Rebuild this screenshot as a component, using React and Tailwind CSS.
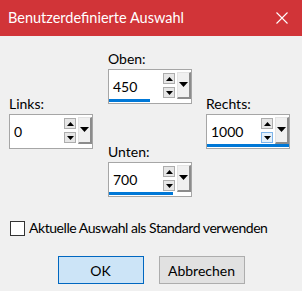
import React from "react";

const Arrow = ({ dir = "up", w = 7, h = 4 }) => (
  <svg width={w} height={h} viewBox={`0 0 ${w} ${h}`} className="block">
    {dir === "up" ? (
      <polygon points={`0,${h} ${w / 2},0 ${w},${h}`} fill="#000" />
    ) : (
      <polygon points={`0,0 ${w},0 ${w / 2},${h}`} fill="#000" />
    )}
  </svg>
);

const SpinField = ({ label, value, bar, hotDown }) => (
  <div className="flex flex-col w-[84px]">
    <span className="h-5 leading-5 text-[14px] text-black">{label}</span>
    <div className="relative flex h-[35px] border border-[#a6a6a6] bg-white">
      <span className="flex items-center w-[54px] pl-[4px] text-[14px] text-black">{value}</span>
      {/* up / down buttons */}
      <div className="flex flex-col gap-[3px] mt-[3px] w-[12px]">
        <div className="flex h-[11px] items-center justify-center border border-[#adadad] bg-[#e6e6e6]">
          <Arrow dir="up" />
        </div>
        <div
          className={
            hotDown
              ? "flex h-[11px] items-center justify-center border border-[#7eb4ea] bg-[#e5f1fb]"
              : "flex h-[11px] items-center justify-center border border-[#adadad] bg-[#e6e6e6]"
          }
        >
          <Arrow dir="down" />
        </div>
      </div>
      {/* dropdown */}
      <div className="ml-[2px] mt-[2px] flex h-[27px] w-[14px] items-start justify-center pt-[9px] border-l border-t border-l-[#e3e3e3] border-t-[#e3e3e3] border-r-2 border-b-2 border-r-[#8c8c8c] border-b-[#8c8c8c] bg-[#f0f0f0]">
        <Arrow dir="down" w={9} h={5} />
      </div>
      {bar > 0 && (
        <div
          className="absolute left-0 bottom-[1px] h-[3px] bg-[#0078d7]"
          style={{ width: `${bar}px` }}
        />
      )}
    </div>
  </div>
);

export default function App() {
  return (
    <div className="w-[302px] h-[291px] bg-[#f0f0f0] font-['Lato',sans-serif] overflow-hidden">
      {/* title bar */}
      <div className="flex h-9 items-center justify-between bg-[#d13438] pl-2 pr-[14px] text-white text-[14.5px]">
        <span>Benutzerdefinierte Auswahl</span>
        <svg width="12" height="12" viewBox="0 0 12 12">
          <path d="M0.5 0.5 L11.5 11.5 M11.5 0.5 L0.5 11.5" stroke="#fff" strokeWidth="1.1" />
        </svg>
      </div>

      {/* fields */}
      <div className="flex pl-[9px] pt-[13px]">
        <div className="mt-[45px]">
          <SpinField label="Links:" value="0" bar={0} />
        </div>
        <div className="ml-[15px] flex flex-col gap-[38px]">
          <SpinField label="Oben:" value="450" bar={41} />
          <SpinField label="Unten:" value="700" bar={64} />
        </div>
        <div className="ml-[14px] mt-[45px]">
          <SpinField label="Rechts:" value="1000" bar={82} hotDown />
        </div>
      </div>

      {/* checkbox */}
      <label className="mt-[21px] flex items-center pl-[10px] text-[14px] text-black whitespace-nowrap">
        <span className="h-[15px] w-[15px] border border-[#333] bg-white" />
        <span className="ml-[4px] leading-5 tracking-[-0.45px]">Aktuelle Auswahl als Standard verwenden</span>
      </label>

      {/* buttons */}
      <div className="mt-[18px] flex justify-center gap-[15px]">
        <button className="h-[28px] w-[86px] border border-[#0067c0] bg-[#cce4f7] text-[14px] text-black">
          OK
        </button>
        <button className="h-[28px] w-[86px] border border-[#adadad] bg-[#e1e1e1] text-[14px] text-black">
          Abbrechen
        </button>
      </div>
    </div>
  );
}
